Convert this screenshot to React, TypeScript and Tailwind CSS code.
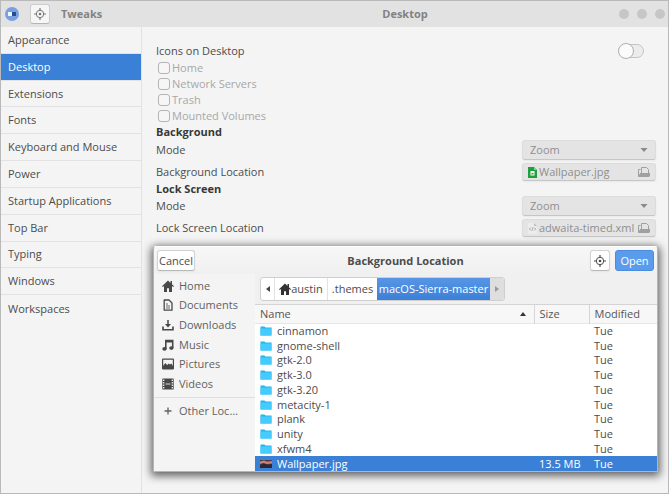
import type { ReactNode } from "react";

const pages = [
  "Appearance",
  "Desktop",
  "Extensions",
  "Fonts",
  "Keyboard and Mouse",
  "Power",
  "Startup Applications",
  "Top Bar",
  "Typing",
  "Windows",
  "Workspaces",
];

const desktopIcons = ["Home", "Network Servers", "Trash", "Mounted Volumes"];

const folders = [
  "cinnamon",
  "gnome-shell",
  "gtk-2.0",
  "gtk-3.0",
  "gtk-3.20",
  "metacity-1",
  "plank",
  "unity",
  "xfwm4",
];

function HomeIcon({ className = "size-3" }: { className?: string }) {
  return (
    <svg viewBox="0 0 12 12" className={className} fill="currentColor" aria-hidden="true">
      <path d="M6 .5 0 6.2l.8.8L2 6v6h3V8.2h2V12h3V6l1.200 1 .8-.8L10 4.300V1H8.500v1.900z" />
    </svg>
  );
}

function DocumentIcon() {
  return (
    <svg viewBox="0 0 12 12" className="size-3" fill="none" stroke="currentColor" aria-hidden="true">
      <path d="M2.200 1h4.800l3 3v7.200H2.200z" strokeWidth="1.300" strokeLinejoin="round" />
      <path d="M4 5h2M4 7h4M4 9h4" strokeWidth=".8" />
    </svg>
  );
}

function DownloadIcon() {
  return (
    <svg viewBox="0 0 12 12" className="size-3" fill="none" stroke="currentColor" aria-hidden="true">
      <path d="M1 7.500v3.300h10V7.500" strokeWidth="1.600" />
      <path d="M6 1v6" strokeWidth="1.500" />
      <path d="M3 5h6L6 8.600z" fill="currentColor" stroke="none" />
    </svg>
  );
}

function MusicIcon() {
  return (
    <svg viewBox="0 0 12 12" className="size-3" fill="currentColor" aria-hidden="true">
      <path d="M3 .8h8.500V9h-1.600V3.500H4.600V10H3z" />
      <ellipse cx="2.500" cy="9.900" rx="2.200" ry="1.800" />
      <ellipse cx="9.400" cy="9.100" rx="2.200" ry="1.800" />
    </svg>
  );
}

function PictureIcon() {
  return (
    <svg viewBox="0 0 12 12" className="size-3" aria-hidden="true">
      <rect x=".6" y="1.100" width="10.800" height="9.800" rx=".5" fill="none" stroke="currentColor" strokeWidth="1.200" />
      <path d="M1 8l2.300-3 1.900 2 1.500-1.600L8 6.600l1.200-1L11 8v3H1z" fill="currentColor" />
    </svg>
  );
}

function VideoIcon() {
  return (
    <svg viewBox="0 0 12 12" className="size-3" aria-hidden="true">
      <rect x=".3" y=".5" width="11.400" height="11" rx=".6" fill="currentColor" />
      <path d="M1.700 1.600v9M10.300 1.600v9" stroke="#f4f4f4" strokeWidth="1.200" strokeDasharray="1.300 1.200" />
      <path d="M3.600 6h4.800" stroke="#f4f4f4" strokeWidth=".9" />
    </svg>
  );
}

function PlusIcon() {
  return (
    <svg viewBox="0 0 12 12" className="size-3" stroke="currentColor" strokeWidth="1.300" aria-hidden="true">
      <path d="M6 2.500v7M2.500 6h7" />
    </svg>
  );
}

function TargetIcon() {
  return (
    <svg viewBox="0 0 12 12" className="size-3" fill="none" stroke="currentColor" aria-hidden="true">
      <circle cx="6" cy="6" r="3.700" />
      <path d="M6 0v3M6 9v3M0 6h3M9 6h3" strokeWidth="1.200" />
      <circle cx="6" cy="6" r="1.300" fill="currentColor" stroke="none" />
    </svg>
  );
}

function FolderIcon() {
  return (
    <svg viewBox="0 0 12 10" className="h-2.5 w-3" aria-hidden="true">
      <path d="M.5.5h4l1 1H11.500V9.500H.5z" fill="#23b5ee" />
      <path d="M.5 2.500h11v7H.5z" fill="#46cbff" />
    </svg>
  );
}

function WallpaperThumb() {
  return (
    <svg viewBox="0 0 12 8" className="h-2 w-3" aria-hidden="true">
      <path d="M0 0h12v8H0z" fill="#4a3e4e" />
      <path d="M0 1.500 4 .5l3 1.200L12 1v2.500L7 4 3 3 0 4z" fill="#c98273" />
      <path d="m0 5 4-1.500L8 5l4-1v4H0z" fill="#2e2733" />
    </svg>
  );
}

function JpgIcon() {
  return (
    <svg viewBox="0 0 9 11" className="h-[11px] w-[9px] shrink-0" aria-hidden="true">
      <path d="M0 0h6l3 3v8H0z" fill="#1fa03a" />
      <path d="M6 0v3h3z" fill="#86d094" />
      <path d="M2.500 4h4v4.500h-4z" fill="#fff" />
      <path d="M3.500 6h2v1.500h-2z" fill="#1fa03a" />
    </svg>
  );
}

function XmlIcon() {
  return (
    <svg viewBox="0 0 9 11" className="h-[11px] w-[9px] shrink-0" aria-hidden="true">
      <path d="M0 0h6l3 3v8H0z" fill="#ececec" />
      <path d="M6 0v3h3z" fill="#bdbdbd" />
      <path d="M2.800 4.500 1.300 6l1.500 1.500M6.200 4.500 7.700 6 6.200 7.500M5 4.300 4 7.700" stroke="#9a9a9a" strokeWidth=".8" fill="none" />
    </svg>
  );
}

function OpenFileIcon() {
  return (
    <svg viewBox="0 0 12 10" className="h-2.5 w-3 shrink-0 text-[#a0a0a0]" aria-hidden="true">
      <path d="M3.500 6V.5h5l2 2V6" fill="none" stroke="currentColor" />
      <path d="M2.500 2.500h-2v7" stroke="currentColor" fill="none" />
      <path d="M0 10 2 6h10v3l-1 1z" fill="currentColor" />
    </svg>
  );
}

const places = [
  { name: "Home", icon: <HomeIcon /> },
  { name: "Documents", icon: <DocumentIcon /> },
  { name: "Downloads", icon: <DownloadIcon /> },
  { name: "Music", icon: <MusicIcon /> },
  { name: "Pictures", icon: <PictureIcon /> },
  { name: "Videos", icon: <VideoIcon /> },
];

function ModeRow({ id }: { id: string }) {
  return (
    <div className="flex h-[22px] items-start justify-between">
      <label htmlFor={id} className="leading-5">Mode</label>
      <div className="relative w-[134px]">
        <select
          id={id}
          disabled
          className="block h-5 w-full appearance-none rounded-[3px] border border-[#dcdcdc] border-b-[#c6c6c6] bg-[#e4e4e4] px-[7px] text-[#8f8f8f] opacity-100 shadow-xs"
        >
          <option>Zoom</option>
        </select>
        <svg viewBox="0 0 8 4" className="pointer-events-none absolute top-2 right-2 h-1 w-2" aria-hidden="true">
          <path d="M.5 0h7L4 4z" fill="#8a8a8a" />
        </svg>
      </div>
    </div>
  );
}

function FileRow({ id, label, file, icon }: { id: string; label: string; file: string; icon: ReactNode }) {
  return (
    <div className="flex h-5 items-center justify-between">
      <label htmlFor={id}>{label}</label>
      <button
        id={id}
        type="button"
        disabled
        className="flex h-[18px] w-[134px] items-center rounded-[3px] border border-[#dcdcdc] border-b-[#c6c6c6] bg-[#e4e4e4] px-[5px] text-[#8f8f8f] shadow-xs"
      >
        {icon}
        <span className="ml-[2px] flex-1 text-left whitespace-nowrap">{file}</span>
        <OpenFileIcon />
      </button>
    </div>
  );
}

function FileDialog() {
  return (
    <section
      role="dialog"
      aria-labelledby="dialog-title"
      className="absolute top-[245px] right-[10px] left-[152px] overflow-hidden rounded-t-[3px] border border-[#b5b5b5] border-t-white bg-[#f4f4f4] shadow-[0_2px_8px_2px_rgba(0,0,0,0.6)]"
    >
      <header className="grid h-[27px] grid-cols-[1fr_auto_1fr] items-center bg-linear-to-b from-[#f7f7f7] to-[#f0f0f0] px-[3px]">
        <button type="button" className="h-[21px] w-[38px] justify-self-start rounded-[3px] border border-[#d2d2d2] border-b-[#b8b8b8] bg-white text-center shadow-xs">
          Cancel
        </button>
        <h2 id="dialog-title" className="font-bold">Background Location</h2>
        <div className="flex gap-[5px] justify-self-end">
          <button type="button" aria-label="Locate" className="flex h-[21px] w-5 items-center justify-center rounded-[3px] border border-[#d2d2d2] border-b-[#b8b8b8] bg-white shadow-xs">
            <TargetIcon />
          </button>
          <button type="button" className="h-[21px] w-[39px] rounded-[3px] border border-[#4a8cdf] bg-[#5a9bec] text-center text-white">
            Open
          </button>
        </div>
      </header>

      <div className="flex">
        <nav aria-label="Places" className="w-[101px] shrink-0">
          <ul className="mt-[2px] grid h-[118px] auto-rows-fr text-[#626262]">
            {places.map((place) => (
              <li key={place.name} className="flex">
                <a href="#" className="flex flex-1 items-center gap-[5px] pl-2">
                  <span className="text-[#484848]">{place.icon}</span>
                  {place.name}
                </a>
              </li>
            ))}
          </ul>
          <a href="#" className="mt-[3px] flex h-[26px] items-center gap-[5px] border-t border-[#dfdfdf] pl-2 text-[#626262]">
            <PlusIcon />
            Other Loc…
          </a>
        </nav>

        <div className="min-w-0 flex-1">
          <div className="flex h-[31px] items-center border-b border-[#d4d4d4] bg-[#f0f0f0] px-[5px]">
            <nav aria-label="Path" className="flex h-6 overflow-hidden rounded-[3px] border border-[#cfcfcf] bg-white">
              <button type="button" aria-label="Back" className="flex w-[14px] items-center justify-center border-r border-[#e2e2e2]">
                <svg viewBox="0 0 4 6" className="h-1.5 w-1" aria-hidden="true">
                  <path d="M4 0v6L0 3z" fill="#444" />
                </svg>
              </button>
              <button type="button" className="flex w-[53px] items-center justify-center border-r border-[#e2e2e2]">
                <HomeIcon className="size-3 shrink-0 text-[#333]" />
                austin
              </button>
              <button type="button" className="w-[49px]">.themes</button>
              <button type="button" className="w-[113px] bg-linear-to-b from-[#5796e6] to-[#3b80d7] whitespace-nowrap text-white">
                macOS-Sierra-master
              </button>
              <button type="button" aria-label="Forward" className="flex w-[14px] items-center justify-center bg-[#dedede]">
                <svg viewBox="0 0 4 6" className="h-1.5 w-1" aria-hidden="true">
                  <path d="M0 0v6l4-3z" fill="#999" />
                </svg>
              </button>
            </nav>
          </div>

          <table className="h-[166px] w-full table-fixed border-collapse bg-white">
            <colgroup>
              <col />
              <col className="w-[55px]" />
              <col className="w-[68px]" />
            </colgroup>
            <thead className="bg-[#f7f7f7] text-left text-[#555]">
              <tr className="h-[18px] border-b border-[#e6e6e6]">
                <th className="border-r border-[#d6d6d6] p-0 pl-[5px] font-normal" aria-sort="ascending">
                  <span className="flex items-center justify-between pr-2">
                    Name
                    <svg viewBox="0 0 6 4" className="h-1 w-1.5" aria-hidden="true">
                      <path d="M3 0 6 4H0z" fill="#333" />
                    </svg>
                  </span>
                </th>
                <th className="border-r border-[#d6d6d6] p-0 pl-[5px] font-normal">Size</th>
                <th className="p-0 pl-[5px] font-normal">Modified</th>
              </tr>
            </thead>
            <tbody>
              {folders.map((folder) => (
                <tr key={folder}>
                  <td className="p-0 pl-[5px]">
                    <span className="flex items-center gap-[5px]">
                      <FolderIcon />
                      {folder}
                    </span>
                  </td>
                  <td className="p-0" />
                  <td className="p-0 pl-[5px]">Tue</td>
                </tr>
              ))}
              <tr className="bg-[#3a80d6] text-white">
                <td className="p-0 pl-[5px]">
                  <span className="flex items-center gap-[5px]">
                    <WallpaperThumb />
                    Wallpaper.jpg
                  </span>
                </td>
                <td className="p-0 pl-[5px] whitespace-nowrap">13.5 MB</td>
                <td className="p-0 pl-[5px]">Tue</td>
              </tr>
            </tbody>
          </table>
        </div>
      </div>
    </section>
  );
}

export default function App() {
  return (
    <div className="relative flex min-h-screen flex-col border border-[#b9b9b9] bg-[#f4f4f4] font-['Open_Sans','Noto_Sans',sans-serif] text-[11px] leading-[14px] text-[#4c4c4c]">
      <header className="grid h-[26px] grid-cols-[141px_1fr] items-center bg-[#e2e2e2] font-bold text-[#828282]">
        <div className="flex items-center pl-1">
          <svg viewBox="0 0 14 14" className="size-3.5" aria-hidden="true">
            <circle cx="7" cy="7" r="7" fill="#7c9fe0" />
            <rect x="3" y="5" width="8" height="4" fill="#1e4f92" />
            <rect x="3" y="5" width="4" height="4" fill="#f2f5fa" />
          </svg>
          <button type="button" aria-label="Search" className="ml-[11px] flex size-5 items-center justify-center rounded-[3px] border border-[#cdcdcd] border-b-[#b5b5b5] bg-[#f6f6f6] text-[#777]">
            <TargetIcon />
          </button>
          <h1 className="ml-[11px]">Tweaks</h1>
        </div>
        <div className="grid grid-cols-[1fr_auto_1fr] items-center">
          <h2 className="col-start-2">Desktop</h2>
          <div className="flex gap-2 justify-self-end pr-[3px]">
            <button type="button" aria-label="Minimize" className="size-2.5 rounded-full bg-[#c6c6c6]" />
            <button type="button" aria-label="Maximize" className="size-2.5 rounded-full bg-[#c6c6c6]" />
            <button type="button" aria-label="Close" className="size-2.5 rounded-full bg-[#c6c6c6]" />
          </div>
        </div>
      </header>

      <div className="flex flex-1">
        <nav className="w-[141px] shrink-0 border-r border-[#e2e2e2]">
          <ul className="grid h-[295px] auto-rows-fr">
            {pages.map((page) => (
              <li key={page} className="flex border-b border-[#e2e2e2] last:border-b-0">
                <a
                  href="#"
                  aria-current={page === "Desktop" ? "page" : undefined}
                  className="flex flex-1 items-center pl-[7px] aria-[current=page]:bg-[#3a80d6] aria-[current=page]:text-white"
                >
                  {page}
                </a>
              </li>
            ))}
          </ul>
        </nav>

        <main className="flex-1 pt-[14px] pr-3 pl-[14px]">
          <div className="flex h-[19px] items-center justify-between">
            <label htmlFor="desktop-icons">Icons on Desktop</label>
            <input
              id="desktop-icons"
              type="checkbox"
              role="switch"
              className="mr-3 flex h-[14px] w-[26px] appearance-none items-center rounded-full border border-[#c4c4c4] bg-[#ececec] before:-ml-px before:size-4 before:shrink-0 before:rounded-full before:border before:border-[#b0b0b0] before:bg-[#fbfbfb]"
            />
          </div>
          {desktopIcons.map((name) => (
            <label key={name} className="flex h-4 items-center gap-[2px] pl-[2px] text-[#a8a8a8]">
              <input type="checkbox" disabled className="size-3 appearance-none rounded-[3px] border border-[#b4b4b4] bg-[#f6f6f6]" />
              {name}
            </label>
          ))}

          <h3 className="font-bold leading-4 text-[#383838]">Background</h3>
          <ModeRow id="background-mode" />
          <FileRow id="background-file" label="Background Location" file="Wallpaper.jpg" icon={<JpgIcon />} />

          <h3 className="font-bold text-[#383838]">Lock Screen</h3>
          <ModeRow id="lock-mode" />
          <FileRow id="lock-file" label="Lock Screen Location" file="adwaita-timed.xml" icon={<XmlIcon />} />
        </main>
      </div>

      <FileDialog />
    </div>
  );
}
